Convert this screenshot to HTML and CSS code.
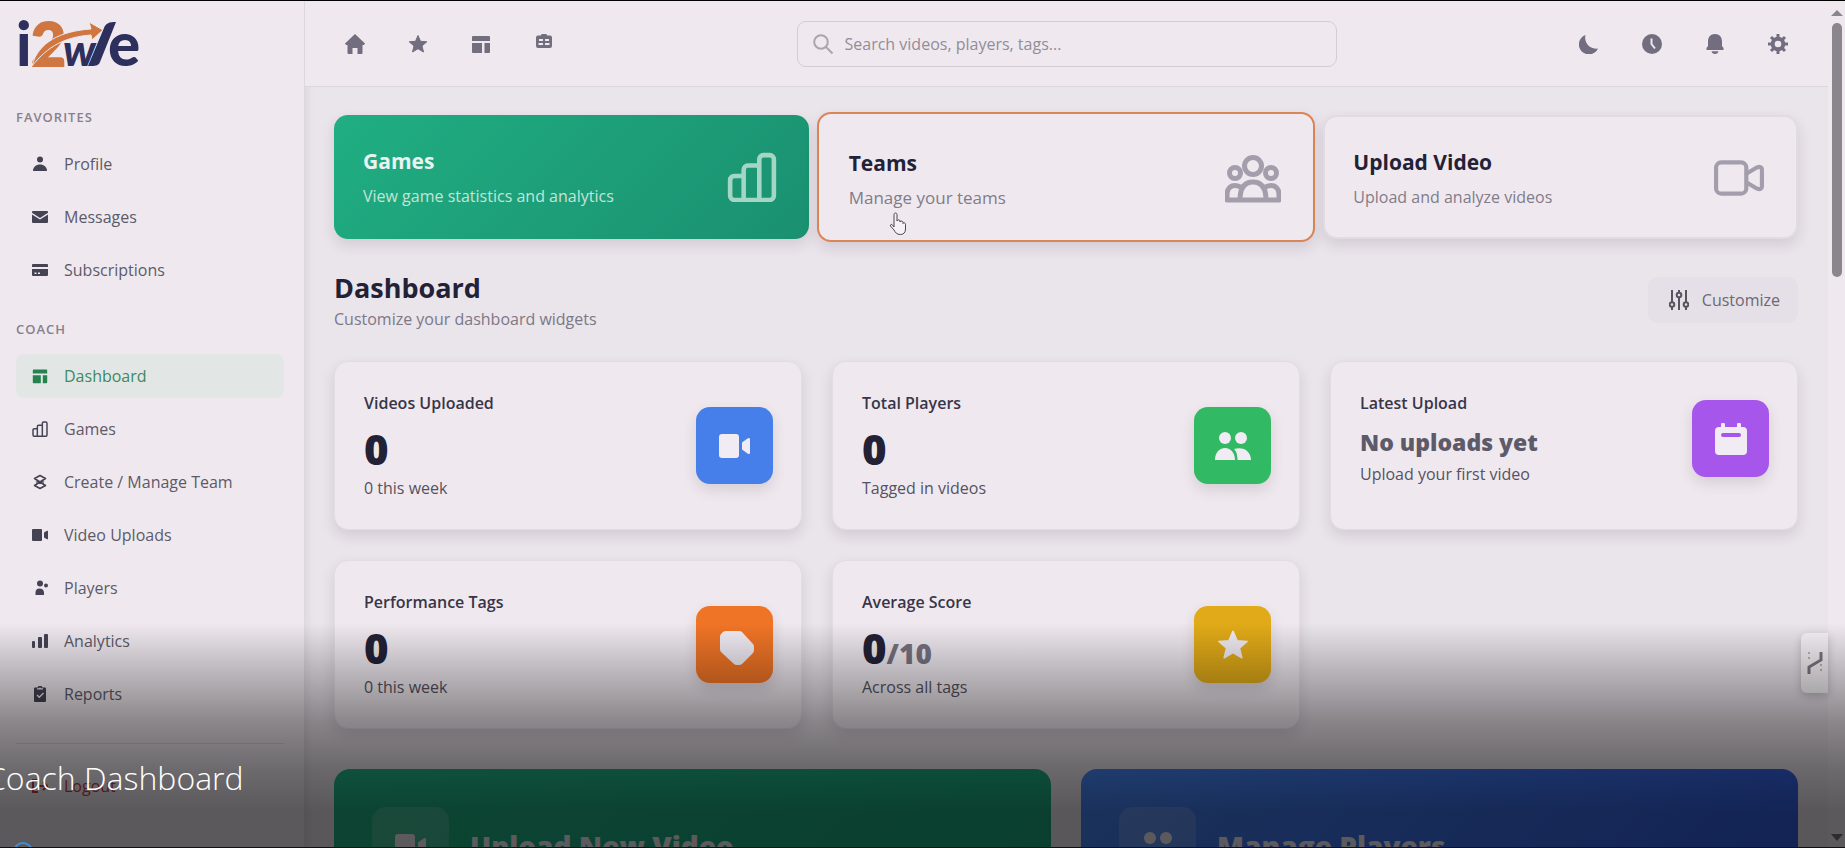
FILE: index.html
```html
<!DOCTYPE html>
<html lang="en">
<head>
    <meta charset="UTF-8">
    <meta name="viewport" content="width=device-width, initial-scale=1.0">
    <title>i2We - Coach Dashboard</title>
    <link rel="stylesheet" href="styles.css">
</head>
<body>
    <!-- Shared icons -->
    <svg class="sprite" aria-hidden="true">
        <symbol id="i-layout" viewBox="0 0 20 20"><path d="M2 2h16a1 1 0 0 1 1 1v4H1V3a1 1 0 0 1 1-1zM1 9h10v10H2a1 1 0 0 1-1-1zM13.500 9H19v9a1 1 0 0 1-1 1h-4.500z"/></symbol>
        <symbol id="i-bars-outline" viewBox="0 0 24 24"><path fill="none" stroke="currentColor" stroke-width="2.200" stroke-linejoin="round" d="M1.500 13.500a2 2 0 0 1 2-2H8V22a1 1 0 0 1-1 1H3.500a2 2 0 0 1-2-2zM8 8.500a2 2 0 0 1 2-2h5.500V22a1 1 0 0 1-1 1H9a1 1 0 0 1-1-1zM15.500 3.500a2 2 0 0 1 2-2h3a2 2 0 0 1 2 2V21a2 2 0 0 1-2 2h-4a1 1 0 0 1-1-1z"/></symbol>
        <symbol id="i-video" viewBox="0 0 32 24"><rect x="0" y="0" width="20" height="24" rx="3"/><path d="M23 8.500 28.500 4.500c1.500-1 2.500-.5 2.500 1v13c0 1.500-1 2-2.500 1L23 15.500z"/></symbol>
        <symbol id="i-star" viewBox="0 0 20 20"><path stroke="currentColor" stroke-width="1" stroke-linejoin="round" d="m10 1.500 2.500 5.800 6.300.5-4.800 4.100 1.500 6.100L10 14.700 4.500 18 6 11.900 1.200 7.800l6.300-.5z"/></symbol>
        <symbol id="i-people" viewBox="0 0 36 28"><circle cx="10" cy="6" r="6"/><circle cx="26" cy="6" r="6"/><path d="M0 28c0-7 4-12 10-12s10 5 10 12zM22.500 28c0-5-1-8.500-3.500-11 9-3 17 2 17 11z"/></symbol>
    </svg>

    <div class="app">
        <aside class="sidebar">
            <a href="#" class="logo" aria-label="i2We">
                <svg width="124" height="50" viewBox="0 0 124 50">
                    <text class="logo-dark" x="0" y="47">i</text>
                    <text class="logo-orange" x="15" y="47">2</text>
                    <text class="logo-dark logo-w" x="47" y="47">w</text>
                    <path class="logo-dark" d="M72 47 88 9c2-5 5-6 12-6L84 43c-1 3-4 4-8 4z"/>
                    <text class="logo-dark" x="92" y="47">e</text>
                    <path class="logo-arrow" d="M16 47C22 23 45 12 75 10L73 3l14 8-11 10-1-5C49 18 32 27 16 47z"/>
                </svg>
            </a>

            <div class="nav-title">FAVORITES</div>
            <nav class="nav">
                <a href="#"><svg viewBox="0 0 16 16"><circle cx="8" cy="3.500" r="3"/><path d="M1 15c0-4 3-6.500 7-6.500s7 2.500 7 6.500z"/></svg>Profile</a>
                <a href="#"><svg viewBox="0 0 16 16"><path d="M1 2h14a1 1 0 0 1 1 1v.8L8 9 0 3.800V3a1 1 0 0 1 1-1zM0 5.500l8 5 8-5V13a1 1 0 0 1-1 1H1a1 1 0 0 1-1-1z"/></svg>Messages</a>
                <a href="#"><svg viewBox="0 0 16 16"><path fill-rule="evenodd" d="M1 2h14a1 1 0 0 1 1 1v2H0V3a1 1 0 0 1 1-1zM0 7h16v6a1 1 0 0 1-1 1H1a1 1 0 0 1-1-1zm2.500 3.500V12h2v-1.500zm3.500 0V12h2v-1.500z"/></svg>Subscriptions</a>
            </nav>

            <div class="nav-title">COACH</div>
            <nav class="nav">
                <a href="#" class="active"><svg><use href="#i-layout"/></svg>Dashboard</a>
                <a href="#"><svg><use href="#i-bars-outline"/></svg>Games</a>
                <a href="#"><svg viewBox="0 0 16 16"><path fill="none" stroke="currentColor" stroke-width="1.600" stroke-linejoin="round" d="M8 1.500 13.500 4.500 8 8 2.500 4.500zM8 8l5.500 3.500L8 14.500l-5.500-3zM4 6.500 12 9.500M12 6.500 4 9.500"/></svg>Create / Manage Team</a>
                <a href="#"><svg viewBox="0 0 16 16"><rect x="0" y="2" width="10" height="12" rx="1"/><path d="M12 5.500 15 3.800c.5-.3 1 0 1 .5v7.400c0 .5-.5.800-1 .5l-3-1.700z"/></svg>Video Uploads</a>
                <a href="#"><svg viewBox="0 0 16 16"><circle cx="8" cy="3.500" r="3"/><circle cx="14" cy="5.500" r="2"/><path d="M3.500 15v-2.500C3.500 10 5 8.500 7.500 8.500s4.500 1.500 4.500 4V15z"/></svg>Players</a>
                <a href="#"><svg viewBox="0 0 16 16"><rect x="0" y="8" width="3" height="7" rx="1"/><rect x="6" y="4" width="4" height="11" rx="1"/><rect x="12" y="1" width="4" height="14" rx="1"/></svg>Analytics</a>
                <a href="#"><svg viewBox="0 0 16 16"><path fill-rule="evenodd" d="M5.500 1.500 6.500 0h3l1 1.500H13a1 1 0 0 1 1 1V15a1 1 0 0 1-1 1H3a1 1 0 0 1-1-1V2.500a1 1 0 0 1 1-1zm-.5 2h6V2.200H9L8 1.200 7 2.200H5zM4.500 9.500 7.300 12.200 12 7.500 11 6.500 7.300 10.200 5.500 8.500z"/></svg>Reports</a>
            </nav>

            <div class="nav nav-bottom">
                <a href="#" class="logout"><svg viewBox="0 0 16 16"><path fill="none" stroke="currentColor" stroke-width="2" d="M6 2H1v12h5M5 8h10M11 4l4 4-4 4"/></svg>Logout</a>
            </div>
        </aside>

        <div class="page">
            <header class="topbar">
                <div class="icon-group">
                    <button aria-label="Home"><svg viewBox="0 0 20 20"><path d="M10 0 20 9.500l-1 1.500h-1.500v8a1 1 0 0 1-1 1h-4v-6h-5v6h-4a1 1 0 0 1-1-1v-8H1L0 9.500z"/></svg></button>
                    <button aria-label="Favorites"><svg><use href="#i-star"/></svg></button>
                    <button aria-label="Dashboard"><svg><use href="#i-layout"/></svg></button>
                    <button aria-label="Roster"><svg viewBox="0 0 20 20"><path fill-rule="evenodd" d="M6.500 1.500 8 0h4l1.500 1.500H16a2 2 0 0 1 2 2V12a2 2 0 0 1-2 2H4a2 2 0 0 1-2-2V3.500a2 2 0 0 1 2-2zM5 5v2h4V5zm6 0v2h4V5zM4.500 9v2H9V9zm6.500 0v2h4.500V9z"/></svg></button>
                </div>
                <label class="search">
                    <svg viewBox="0 0 20 20"><circle cx="8" cy="8" r="6.800"/><path d="m13 13 6.500 6.500"/></svg>
                    <input type="text" aria-label="Search" placeholder="Search videos, players, tags...">
                </label>
                <div class="icon-group">
                    <button aria-label="Dark mode"><svg viewBox="0 0 20 20"><path d="M6.500 1A10 10 0 1 0 19 14.500 11 11 0 0 1 6.500 1z"/></svg></button>
                    <button aria-label="History"><svg viewBox="0 0 20 20"><circle cx="10" cy="10" r="10"/><path class="clock-hand" d="M9.500 4.500V10l3.500 4.500"/></svg></button>
                    <button aria-label="Notifications"><svg viewBox="0 0 20 20"><path d="M10 0c4.500 0 7 3 7 7.500V12l1.500 2v2h-17v-2L3 12V7.500C3 3 5.500 0 10 0zM6.500 17.200h7C13 19 12 20 10 20s-3-1-3.500-2.800z"/></svg></button>
                    <button aria-label="Settings"><svg viewBox="0 0 20 20"><circle cx="10" cy="10" r="5.300" fill="none" stroke="currentColor" stroke-width="4"/><path fill="none" stroke="currentColor" stroke-width="3" d="M10 0v4M10 16v4M0 10h4M16 10h4M3 3l2.800 2.800M14.200 14.200 17 17M17 3l-2.800 2.800M5.800 14.200 3 17"/></svg></button>
                </div>
            </header>

            <main class="content">
                <section class="shortcuts">
                    <a href="#" class="shortcut primary">
                        <div>
                            <h2>Games</h2>
                            <p>View game statistics and analytics</p>
                        </div>
                        <svg class="shortcut-icon"><use href="#i-bars-outline"/></svg>
                    </a>
                    <a href="#" class="shortcut hovered">
                        <div>
                            <h2>Teams</h2>
                            <p>Manage your teams</p>
                        </div>
                        <svg class="shortcut-icon wide" viewBox="0 0 56 48"><circle cx="28" cy="11" r="8.500"/><circle cx="10" cy="18" r="5.500"/><circle cx="46" cy="18" r="5.500"/><path d="M15 45c0-11 4-18 13-18s13 7 13 18zM15 45H2v-5c0-6 3-9.500 8-9.500 3 0 5 1 7 2.500M41 45h13v-5c0-6-3-9.500-8-9.500-3 0-5 1-7 2.500"/></svg>
                        <svg class="cursor" viewBox="0 0 18 24"><path d="M5 15V2.500c0-2 3-2 3 0V9c0-1.500 3-1.500 3 0v1c0-1.500 3-1.200 3 .5v1c0-1.300 2.500-1 2.500.8V17c0 3.500-2 5.500-5 5.500-4 0-5-2-6.500-4.500L1.500 14c-.5-1.500 1-2.200 2-1z"/></svg>
                    </a>
                    <a href="#" class="shortcut">
                        <div>
                            <h2>Upload Video</h2>
                            <p>Upload and analyze videos</p>
                        </div>
                        <svg class="shortcut-icon" viewBox="0 0 48 48"><rect x="2" y="9" width="29" height="30" rx="5"/><path d="m31 20 10-6c3-1.500 5-.5 5 2v16c0 2.500-2 3.500-5 2l-10-6"/></svg>
                    </a>
                </section>

                <div class="section-head">
                    <div>
                        <h1>Dashboard</h1>
                        <p>Customize your dashboard widgets</p>
                    </div>
                    <button class="btn">
                        <svg viewBox="0 0 20 20"><path d="M3 0v12M3 17v3M10 0v2M10 8v12M17 0v12M17 17v3"/><circle cx="3" cy="14.500" r="2.300"/><circle cx="10" cy="5" r="2.300"/><circle cx="17" cy="14.500" r="2.300"/></svg>
                        Customize
                    </button>
                </div>

                <section class="stats">
                    <div class="card">
                        <div class="card-row">
                            <div>
                                <div class="card-title">Videos Uploaded</div>
                                <div class="card-value">0</div>
                                <div class="card-note">0 this week</div>
                            </div>
                            <div class="tile blue"><svg width="32" height="24"><use href="#i-video"/></svg></div>
                        </div>
                    </div>
                    <div class="card">
                        <div class="card-row">
                            <div>
                                <div class="card-title">Total Players</div>
                                <div class="card-value">0</div>
                                <div class="card-note">Tagged in videos</div>
                            </div>
                            <div class="tile green"><svg width="36" height="28"><use href="#i-people"/></svg></div>
                        </div>
                    </div>
                    <div class="card">
                        <div class="card-row">
                            <div>
                                <div class="card-title">Latest Upload</div>
                                <div class="card-value small">No uploads yet</div>
                                <div class="card-note">Upload your first video</div>
                            </div>
                            <div class="tile purple"><svg width="32" height="32" viewBox="0 0 32 32"><path fill-rule="evenodd" d="M6 1.500a1.500 1.500 0 0 1 4 0V4h12V1.500a1.500 1.500 0 0 1 4 0V4h2a4 4 0 0 1 4 4v20a4 4 0 0 1-4 4H4a4 4 0 0 1-4-4V8a4 4 0 0 1 4-4h2zM8 10a2 2 0 0 0 0 4h16a2 2 0 0 0 0-4z"/></svg></div>
                        </div>
                    </div>
                    <div class="card">
                        <div class="card-row">
                            <div>
                                <div class="card-title">Performance Tags</div>
                                <div class="card-value">0</div>
                                <div class="card-note">0 this week</div>
                            </div>
                            <div class="tile orange"><svg class="tag-icon" width="34" height="34" viewBox="0 0 34 34"><path d="M6 0h13q2 0 3 1l11 12q1 1 1 3v3q0 2-1 3L22 33q-1 1-3 1h-2q-2 0-3-1L1 21q-1-1-1-3V6q0-2 1-3l2-2q1-1 3-1z"/></svg></div>
                        </div>
                    </div>
                    <div class="card">
                        <div class="card-row">
                            <div>
                                <div class="card-title">Average Score</div>
                                <div class="card-value">0<span>/10</span></div>
                                <div class="card-note">Across all tags</div>
                            </div>
                            <div class="tile yellow"><svg width="32" height="32"><use href="#i-star"/></svg></div>
                        </div>
                    </div>
                </section>

                <section class="actions">
                    <a href="#" class="action green-bg">
                        <div class="tile glass"><svg width="32" height="24"><use href="#i-video"/></svg></div>
                        <h2>Upload New Video</h2>
                    </a>
                    <a href="#" class="action blue-bg">
                        <div class="tile glass"><svg width="36" height="28"><use href="#i-people"/></svg></div>
                        <h2>Manage Players</h2>
                    </a>
                </section>
            </main>
        </div>

        <div class="scrollbar" aria-hidden="true">
            <span class="arrow up"></span>
            <span class="thumb"></span>
            <span class="arrow down"></span>
        </div>
    </div>

    <button class="side-handle" aria-label="Open panel">
        <svg viewBox="0 0 16 22"><path d="M2 22v-7L14 8V0"/><path class="dots" d="M2 0v9M14 12v10"/></svg>
    </button>

    <!-- Video player overlay -->
    <div class="overlay">
        <div class="caption">Coach Dashboard</div>
        <span class="progress-knob"></span>
    </div>
</body>
</html>
```
FILE: styles.css
```css
* {
    margin: 0;
    padding: 0;
    box-sizing: border-box;
    font-family: 'Open Sans', 'Noto Sans', sans-serif;
}

body {
    height: 100vh;
    overflow: hidden;
    background-color: #eae4eb;
    color: #232136;
    font-size: 16px;
    border-top: 1px solid #000;
    position: relative;
}

a {
    color: inherit;
    text-decoration: none;
}

button {
    border: none;
    background: none;
    color: inherit;
    cursor: pointer;
}

svg {
    fill: currentColor;
    flex-shrink: 0;
}

.sprite {
    position: absolute;
    width: 0;
    height: 0;
}

.app {
    display: flex;
    height: 100%;
}

/* Sidebar */
.sidebar {
    width: 305px;
    flex-shrink: 0;
    padding: 18px 20px 0 16px;
    background-color: #efe9ef;
    border-right: 1px solid #ddd7de;
    box-shadow: 2px 0 8px rgba(60, 40, 70, 0.08);
    overflow: hidden;
}

.logo {
    display: block;
    height: 88px;
}

.logo svg {
    overflow: visible;
}

.logo text {
    font-family: Lato, sans-serif;
    font-size: 60px;
    font-weight: 900;
}

.logo .logo-w {
    font-size: 44px;
    font-style: italic;
}

.logo-dark {
    fill: #2d2f5c;
}

.logo-orange {
    fill: #cf7641;
    stroke: #cf7641;
    stroke-width: 2;
}

.logo-arrow {
    fill: #cf7641;
    stroke: #efe9ef;
    stroke-width: 1;
}

.nav-title {
    margin-bottom: 15px;
    color: #86818c;
    font-size: 13px;
    font-weight: 600;
    line-height: 20px;
    letter-spacing: 1px;
}

.nav {
    display: flex;
    flex-direction: column;
    gap: 9px;
    margin-bottom: 27px;
}

.nav a {
    display: flex;
    align-items: center;
    gap: 16px;
    height: 44px;
    padding: 0 16px;
    border-radius: 8px;
    color: #5d5a68;
    font-size: 16px;
}

.nav a svg {
    width: 16px;
    height: 16px;
    color: #454253;
}

.nav a.active {
    background-color: #e2e7e5;
    color: #3f8863;
}

.nav a.active svg {
    color: #258350;
}

.nav-bottom {
    padding-top: 20px;
    border-top: 1px solid #d8d2d9;
}

.nav a.logout,
.nav a.logout svg {
    color: #c43b45;
}

/* Top bar */
.page {
    flex: 1;
    min-width: 0;
    overflow: hidden;
}

.topbar {
    display: flex;
    align-items: center;
    justify-content: space-between;
    gap: 30px;
    height: 86px;
    padding: 0 30px;
    background-color: #efe9ef;
    border-bottom: 1px solid #dcd6dd;
}

.icon-group {
    display: flex;
    gap: 23px;
}

.icon-group button {
    display: flex;
    align-items: center;
    justify-content: center;
    width: 40px;
    height: 40px;
    color: #736d80;
}

.icon-group svg {
    width: 20px;
    height: 20px;
}

.clock-hand {
    fill: none;
    stroke: #efe9ef;
    stroke-width: 2;
}

.search {
    display: flex;
    align-items: center;
    gap: 12px;
    flex: 0 1 540px;
    height: 46px;
    padding: 0 15px;
    border: 1px solid #d3cdd5;
    border-radius: 9px;
}

.search svg {
    width: 20px;
    height: 20px;
    fill: none;
    stroke: #aaa4af;
    stroke-width: 2;
}

.search input {
    flex: 1;
    border: none;
    outline: none;
    background: none;
    font-size: 16px;
    color: #232136;
}

.search input::placeholder {
    color: #928d98;
}

/* Shortcut cards */
.content {
    padding: 28px 30px 0 29px;
}

.shortcuts {
    display: grid;
    grid-template-columns: repeat(3, 1fr);
    gap: 20px;
}

.shortcut {
    position: relative;
    display: flex;
    align-items: center;
    justify-content: space-between;
    height: 124px;
    padding: 2px 32px 0 28px;
    background-color: #efe9ef;
    border: 2px solid #e1dbe2;
    border-radius: 14px;
    box-shadow: 0 6px 14px rgba(60, 40, 60, 0.13);
}

.shortcut h2 {
    font-size: 21px;
    line-height: 32px;
}

.shortcut p {
    margin-top: 6px;
    color: #817c89;
    font-size: 16px;
    line-height: 26px;
}

.shortcut.primary {
    background: linear-gradient(135deg, #20ae82, #1a9070);
    border: none;
    color: #eaf3ef;
    padding: 0 32px 0 29px;
}

.shortcut.primary p {
    color: #c4e4d8;
}

.shortcut.hovered {
    height: 130px;
    margin: -3px -12px;
    padding: 4px 32px 0 30px;
    border-color: #d98555;
}

.shortcut.hovered p {
    font-size: 17px;
}

.shortcut-icon {
    width: 50px;
    height: 50px;
    fill: none;
    stroke: #a49eac;
    stroke-width: 4;
    stroke-linejoin: round;
}

.shortcut-icon.wide {
    width: 56px;
    height: 48px;
    stroke-width: 5;
}

.primary .shortcut-icon {
    color: #a4d6c5;
    stroke: none;
}

.cursor {
    position: absolute;
    left: 70px;
    top: 98px;
    width: 18px;
    height: 24px;
    fill: #f5f1f5;
    stroke: #4a4753;
    stroke-width: 1;
}

/* Dashboard heading */
.section-head {
    display: flex;
    align-items: center;
    justify-content: space-between;
    margin: 30px 0;
}

.section-head h1 {
    font-size: 27px;
    line-height: 38px;
}

.section-head p {
    color: #7d7885;
    font-size: 16px;
    line-height: 24px;
}

.btn {
    display: flex;
    align-items: center;
    gap: 13px;
    height: 46px;
    padding: 0 18px 0 21px;
    border-radius: 10px;
    background-color: #e5dfe7;
    color: #6c6874;
    font-size: 16px;
}

.btn svg {
    width: 20px;
    height: 20px;
    fill: none;
    stroke: #57535f;
    stroke-width: 2;
}

/* Stat cards */
.stats {
    display: grid;
    grid-template-columns: repeat(3, 1fr);
    gap: 30px;
}

.card {
    padding: 28px 28px 28px 29px;
    background-color: #efe9ef;
    border: 1px solid #e2dce3;
    border-radius: 14px;
    box-shadow: 0 6px 14px rgba(60, 40, 60, 0.13);
}

.card-row {
    display: flex;
    align-items: center;
    justify-content: space-between;
}

.card-title {
    color: #383548;
    font-size: 16px;
    font-weight: 600;
    line-height: 26px;
}

.card-value {
    margin: 10px 0 3px;
    font-size: 42px;
    font-weight: 800;
    line-height: 46px;
}

.card-value span {
    color: #767280;
    font-size: 28px;
    line-height: 28px;
}

.card-value.small {
    margin: 10px 0 3px;
    color: #5d5a69;
    font-size: 23px;
    line-height: 32px;
}

.card-note {
    color: #56525f;
    font-size: 16px;
    font-weight: 500;
    line-height: 26px;
}

.tile {
    display: flex;
    align-items: center;
    justify-content: center;
    flex-shrink: 0;
    width: 77px;
    height: 77px;
    border-radius: 14px;
    color: #f1ebf3;
    box-shadow: 0 6px 14px rgba(60, 40, 60, 0.14);
}

.blue { background-color: #467fe9; }
.green { background-color: #32b964; }
.purple { background-color: #a656ea; }
.orange { background-color: #f07426; }
.yellow { background-color: #e0aa18; }

.tag-icon {
    margin-left: 5px;
    margin-top: 6px;
}

/* Action banners */
.actions {
    display: grid;
    grid-template-columns: repeat(2, 1fr);
    gap: 30px;
    margin-top: 40px;
}

.action {
    display: flex;
    align-items: center;
    gap: 21px;
    height: 153px;
    padding: 0 38px;
    border-radius: 16px;
    color: #f1ebf3;
}

.action h2 {
    font-size: 28px;
    font-weight: 800;
}

.green-bg { background: linear-gradient(135deg, #20b284, #1aa57c); }
.blue-bg { background: linear-gradient(135deg, #4584f0, #3059dc); }

.tile.glass {
    background-color: rgba(255, 255, 255, 0.16);
    box-shadow: none;
}

/* Scrollbar */
.scrollbar {
    display: flex;
    flex-direction: column;
    align-items: center;
    width: 17px;
    padding: 9px 0 7px;
    background-color: #efe9ef;
}

.arrow {
    border-left: 6px solid transparent;
    border-right: 6px solid transparent;
}

.arrow.up {
    border-bottom: 6px solid #8b858d;
}

.arrow.down {
    margin-top: auto;
    border-top: 7px solid #77727a;
}

.thumb {
    width: 10px;
    height: 254px;
    margin-top: 7px;
    border-radius: 5px;
    background-color: #8b858d;
}

.side-handle {
    position: absolute;
    right: 17px;
    bottom: 155px;
    display: flex;
    align-items: center;
    justify-content: center;
    width: 27px;
    height: 60px;
    border-radius: 6px 0 0 6px;
    background-color: #f5f0f5;
    box-shadow: 0 3px 8px rgba(60, 40, 60, 0.25);
}

.side-handle svg {
    width: 16px;
    height: 22px;
    fill: none;
    stroke: #7b7680;
    stroke-width: 3;
}

.side-handle .dots {
    stroke-width: 2;
    stroke-dasharray: 2 3;
    opacity: 0.5;
}

/* Player overlay */
.overlay {
    position: absolute;
    left: 0;
    right: 0;
    bottom: 0;
    height: 225px;
    overflow: hidden;
    background: linear-gradient(rgba(0, 0, 0, 0), rgba(0, 0, 0, 0.2) 20%, rgba(0, 0, 0, 0.42) 44%, rgba(0, 0, 0, 0.55) 66%, rgba(0, 0, 0, 0.62) 84%);
    border-bottom: 1px solid #111;
    pointer-events: none;
}

.caption {
    position: absolute;
    left: -14px;
    top: 132px;
    color: #fff;
    font-size: 32px;
    font-weight: 300;
    line-height: 46px;
}

.progress-knob {
    position: absolute;
    left: 13px;
    top: 219px;
    width: 20px;
    height: 20px;
    border: 2px solid #3f8fd6;
    border-radius: 50%;
}
```
